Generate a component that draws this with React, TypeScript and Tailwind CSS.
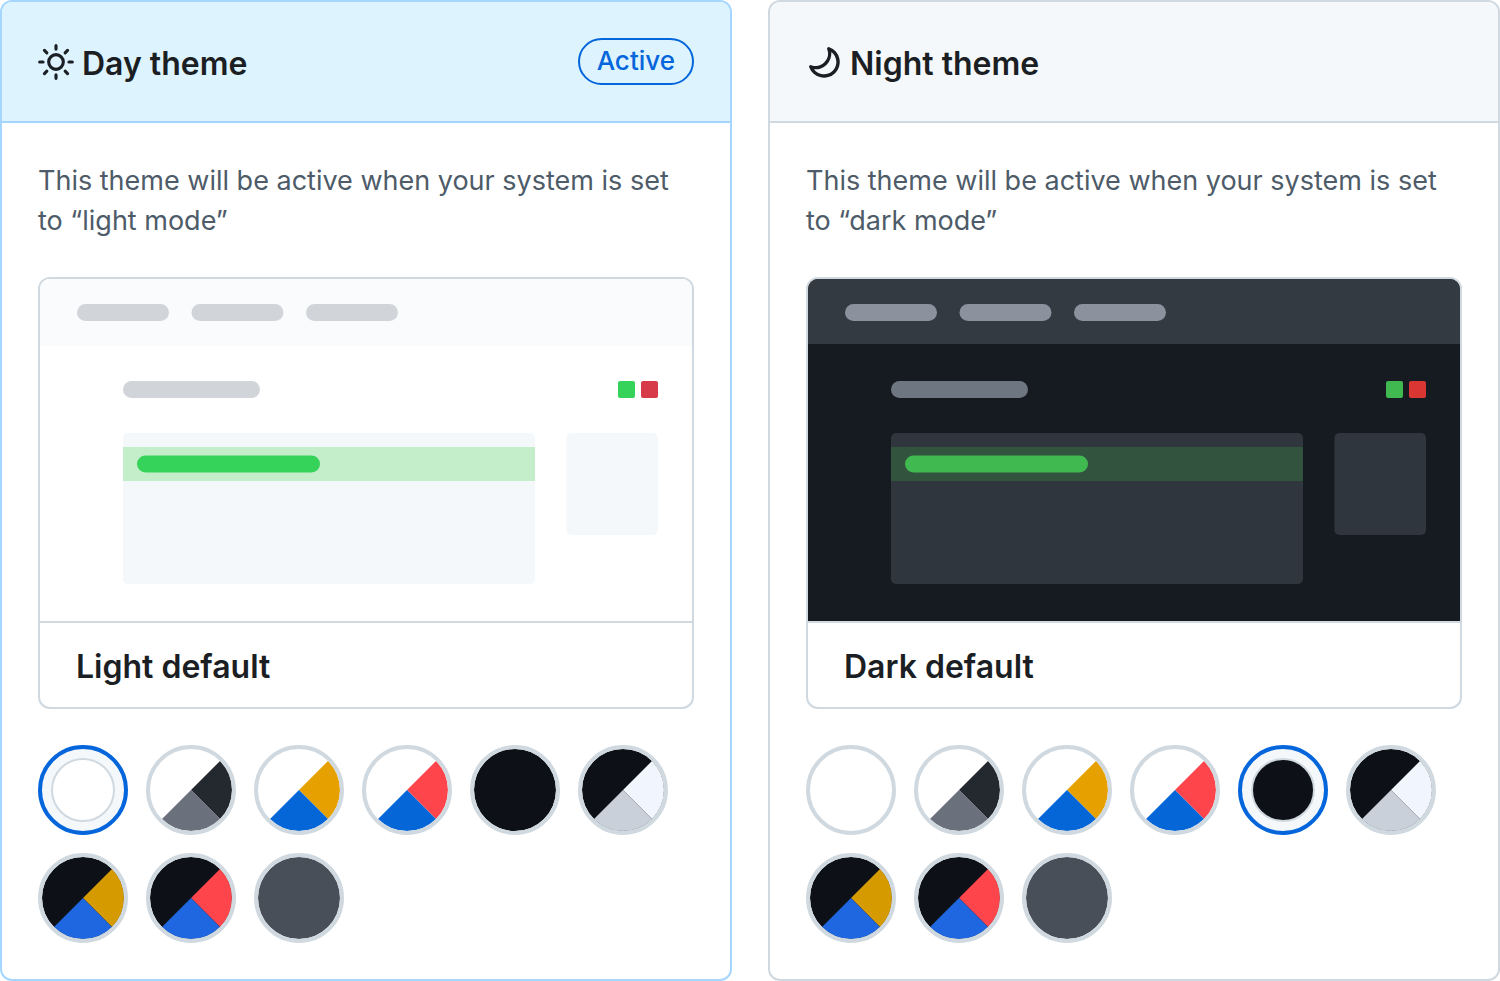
import { useState } from "react";
import clsx from "clsx";

type Swatch = {
  name: string;
  dark?: boolean;
  base: string;
  right?: string;
  bottom?: string;
};

const SWATCHES: Swatch[] = [
  { name: "Light default", base: "#ffffff" },
  { name: "Light high contrast", base: "#ffffff", right: "#24292f", bottom: "#6a707c" },
  { name: "Light Protanopia & Deuteranopia", base: "#ffffff", right: "#e6a000", bottom: "#0566d8" },
  { name: "Light Tritanopia", base: "#ffffff", right: "#fd454b", bottom: "#0566d8" },
  { name: "Dark default", dark: true, base: "#0d1117" },
  { name: "Dark high contrast", dark: true, base: "#0d1117", right: "#f0f5fe", bottom: "#c9d0da" },
  { name: "Dark Protanopia & Deuteranopia", dark: true, base: "#0d1117", right: "#d59a00", bottom: "#1e67e0" },
  { name: "Dark Tritanopia", dark: true, base: "#0d1117", right: "#fd454b", bottom: "#1e67e0" },
  { name: "Dark dimmed", dark: true, base: "#484f58" },
];

const LIGHT = {
  bg: "#ffffff",
  header: "#fafbfd",
  headerHeight: 67,
  nav: "#d1d5da",
  title: "#d1d5da",
  panel: "#f4f8fb",
  band: "#c4edca",
  green: "#36d35a",
  red: "#d73a49",
};

const DARK = {
  bg: "#161b22",
  header: "#343a42",
  headerHeight: 65,
  nav: "#8b919d",
  title: "#6e7681",
  panel: "#30363d",
  band: "#32543f",
  green: "#40ba50",
  red: "#da3633",
};

function SunIcon() {
  return (
    <svg viewBox="0 0 16 16" className="size-9" fill="none" stroke="currentColor" strokeWidth="1.4" strokeLinecap="round" aria-hidden="true">
      <circle cx="8" cy="8" r="3.25" />
      <path d="M8 .75v1.5M8 13.75v1.5M.75 8h1.5M13.75 8h1.5M2.87 2.87l1.06 1.06M12.07 12.07l1.06 1.06M2.87 13.13l1.06-1.06M12.07 3.93l1.06-1.06" />
    </svg>
  );
}

function MoonIcon() {
  return (
    <svg viewBox="0 0 16 16" className="size-9" fill="currentColor" aria-hidden="true">
      <path
        fillRule="evenodd"
        d="M9.598 1.591a.75.75 0 01.785-.175 7 7 0 11-8.967 8.967.75.75 0 01.961-.96 5.5 5.5 0 007.046-7.046.75.75 0 01.175-.786zm1.616 1.945a7 7 0 01-7.678 7.678 5.5 5.5 0 107.678-7.678z"
      />
    </svg>
  );
}

function Preview({ dark }: { dark?: boolean }) {
  const c = dark ? DARK : LIGHT;
  return (
    <svg viewBox="0 0 652 342" className="block w-full" aria-hidden="true">
      <rect width="652" height="342" fill={c.bg} />
      <rect width="652" height={c.headerHeight} fill={c.header} />
      <g fill={c.nav}>
        <rect x="37" y="25" width="92" height="17" rx="8.5" />
        <rect x="151.5" y="25" width="92" height="17" rx="8.5" />
        <rect x="266" y="25" width="92" height="17" rx="8.5" />
      </g>
      <rect x="83" y="102" width="137" height="17" rx="8.5" fill={c.title} />
      <rect x="578" y="102" width="17" height="17" rx="2" fill={c.green} />
      <rect x="601" y="102" width="17" height="17" rx="2" fill={c.red} />
      <rect x="83" y="154" width="412" height="151" rx="5" fill={c.panel} />
      <rect x="83" y="168" width="412" height="34" fill={c.band} />
      <rect x="97" y="176.5" width="183" height="17" rx="8.5" fill={c.green} />
      <rect x="526.5" y="154" width="91.5" height="102" rx="5" fill={c.panel} />
    </svg>
  );
}

function SwatchIcon({ swatch, selected }: { swatch: Swatch; selected: boolean }) {
  const r = selected ? 31 : 41;
  const d = r * Math.SQRT1_2;
  return (
    <svg viewBox="-45 -45 90 90" className="block size-[90px]" aria-hidden="true">
      {selected && <circle r="43" fill="#f4f8fb" stroke="#0566dc" strokeWidth="4" />}
      <circle r={r} fill={swatch.base} />
      {swatch.right && <path d={`M0 0L${d} ${-d}A${r} ${r} 0 0 1 ${d} ${d}Z`} fill={swatch.right} />}
      {swatch.bottom && <path d={`M0 0L${d} ${d}A${r} ${r} 0 0 1 ${-d} ${d}Z`} fill={swatch.bottom} />}
      <circle r={selected ? 31 : 43} fill="none" stroke="#d0d9e0" strokeWidth={selected ? 2 : 4} />
    </svg>
  );
}

type ThemeCardProps = {
  id: string;
  title: string;
  icon: React.ReactNode;
  description: string;
  initial: string;
  active?: boolean;
};

function ThemeCard({ id, title, icon, description, initial, active }: ThemeCardProps) {
  const [selected, setSelected] = useState(initial);
  const current = SWATCHES.find((s) => s.name === selected);

  return (
    <section
      className={clsx(
        "overflow-hidden rounded-xl border-2 bg-white",
        active ? "border-[#a5d6ff]" : "border-[#d0d9e0]"
      )}
    >
      <header
        className={clsx(
          "flex items-center justify-between border-b-2 p-9",
          active ? "border-[#a5d6ff] bg-[#ddf4ff]" : "border-[#d0d9e0] bg-[#f5f8fb]"
        )}
      >
        <h2 className="flex h-[47px] items-center gap-2 text-[32px] leading-10 font-semibold">
          {icon}
          <span className="pt-1">{title}</span>
        </h2>
        {active && (
          <span className="flex h-[47px] items-center rounded-full border-2 border-[#0566dc] px-[17px] pb-0.5 text-[26px] font-medium text-[#0566dc]">
            Active
          </span>
        )}
      </header>
      <div className="px-9 pt-[38px] pb-9">
        <p className="pb-9 text-[27px] leading-10 text-[#4e5b68]">{description}</p>
        <div className="overflow-hidden rounded-xl border-2 border-[#d0d9e0]">
          <Preview dark={current?.dark} />
          <h3 className="border-t-2 border-[#d0d9e0] px-9 pt-6 pb-5 text-[32px] leading-10 font-semibold">{selected}</h3>
        </div>
        <div role="radiogroup" aria-label={title} className="flex flex-wrap gap-[18px] pt-9">
          {SWATCHES.map((s) => (
            <label key={s.name} className="relative cursor-pointer rounded-full focus-within:outline-2">
              <input
                type="radio"
                name={id}
                value={s.name}
                aria-label={s.name}
                checked={s.name === selected}
                onChange={() => setSelected(s.name)}
                className="sr-only"
              />
              <SwatchIcon swatch={s} selected={s.name === selected} />
            </label>
          ))}
        </div>
      </div>
    </section>
  );
}

export default function App() {
  return (
    <main className="grid grid-cols-2 gap-9 bg-white font-['Inter','Liberation_Sans',sans-serif] text-[#1b1f24]">
      <ThemeCard
        id="day-theme"
        title="Day theme"
        icon={<SunIcon />}
        description="This theme will be active when your system is set to “light mode”"
        initial="Light default"
        active
      />
      <ThemeCard
        id="night-theme"
        title="Night theme"
        icon={<MoonIcon />}
        description="This theme will be active when your system is set to “dark mode”"
        initial="Dark default"
      />
    </main>
  );
}
